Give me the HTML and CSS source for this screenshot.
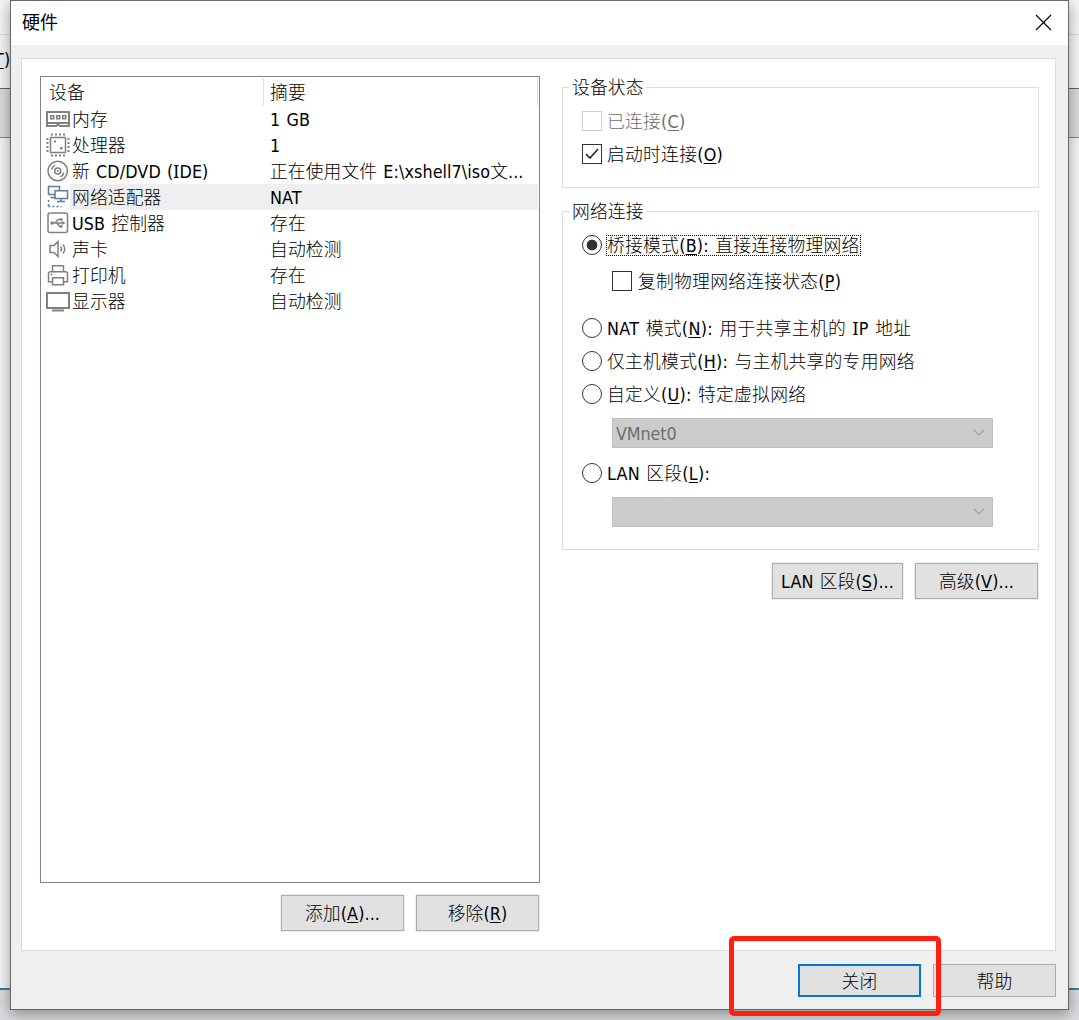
FILE: index.html
```html
<!DOCTYPE html>
<html lang="zh-CN">
<head>
<meta charset="utf-8">
<title>硬件</title>
<link rel="stylesheet" href="styles.css">
</head>
<body>
<div class="backdrop">
  <div class="b-title"></div>
  <div class="b-menu"><span><u>T</u>)</span></div>
  <div class="b-toolbar"></div>
  <div class="b-body"></div>
  <div class="b-status"></div>
</div>
<main class="dialog">
  <header class="titlebar">
    <h1>硬件</h1>
    <svg class="close" width="17" height="17" viewBox="0 0 17 17"><path d="M1 1L16 16M16 1L1 16"/></svg>
  </header>
  <section class="panel">
    <div class="left">
      <div class="list">
        <div class="row head"><span>设备</span><span class="sum">摘要</span></div>
        <div class="row">
          <svg class="ico" viewBox="0 0 24 24"><path stroke-width="2" d="M1 5h22v11H1zM1 14v5h9l2-1.500 2 1.500h9V14"/><path stroke-width="1.500" d="M4.750 8.750h3v3h-3zM10.750 8.750h3v3h-3zM16.750 8.750h3v3h-3z"/></svg>
          <span class="name">内存</span><span class="sum">1 GB</span></div>
        <div class="row">
          <svg class="ico" viewBox="0 0 24 24"><path stroke-width="1.500" d="M4.500 4.500h15v15h-15z"/><path stroke-width="2" stroke-dasharray="2 2" d="M5 1.500h14M5 22.500h14M1.500 5v14M22.500 5v14"/><path fill="#808080" stroke="none" d="M8 7.500h2v2H8zM14 14h2.500v2.500H14z"/></svg>
          <span class="name">处理器</span><span class="sum">1</span></div>
        <div class="row">
          <svg class="ico" viewBox="0 0 24 24"><circle cx="11.700" cy="12" r="9.700"/><circle cx="11.700" cy="12" r="3"/><circle cx="11.700" cy="12" r="1" fill="#808080" stroke="none"/><path d="M5.500 10.500a6.500 6.500 0 0 1 3.700-4.400M18 13.500a6.500 6.500 0 0 1-3.700 4.400"/></svg>
          <span class="name">新 CD/DVD (<span class="serif-i">I</span>DE)</span><span class="sum path">正在使用文件 E:\xshell7\iso文...</span></div>
        <div class="row selected">
          <svg class="ico net" viewBox="0 0 24 24"><path d="M8.500 9.500H2.500V1.500h11v4M9 5.750h12.500v7.750H9zM15 13.500v3M11 16.500h8M4.500 12.500h4"/><path stroke-dasharray="2 2" d="M2.500 15v6M2.500 21.500h13"/></svg>
          <span class="name">网络适配器</span><span class="sum">NAT</span></div>
        <div class="row">
          <svg class="ico" viewBox="0 0 24 24"><rect x="2" y="2" width="19.500" height="19.500" rx="2"/><path d="M6 12h11M8 12c3 0 2-3.500 5-3.500h2M10 12c3 0 2 3.500 4 3.500h2"/><path fill="#808080" stroke="none" d="M16 10l3.500 2-3.500 2zM14 7.200h2.500v2.500H14zM14 14.200h2.500v2.500H14z"/><circle cx="6" cy="12" r="1.700" fill="#808080" stroke="none"/></svg>
          <span class="name">USB 控制器</span><span class="sum">存在</span></div>
        <div class="row">
          <svg class="ico" viewBox="0 0 24 24"><path d="M4 8.500h4l4-4v15l-4-4H4zM14.500 9.500q2 2.500 0 5M17 7.500q3.500 4.500 0 9"/></svg>
          <span class="name">声卡</span><span class="sum">自动检测</span></div>
        <div class="row">
          <svg class="ico" viewBox="0 0 24 24"><path d="M6.500 8.750v-6h11v6M6.500 18.750h-4v-8q0-2 2-2h15q2 0 2 2v8h-4M6.500 14.750h11v7h-11zM4.500 11.500h2"/></svg>
          <span class="name">打印机</span><span class="sum">存在</span></div>
        <div class="row">
          <svg class="ico" viewBox="0 0 24 24"><path stroke-width="2" d="M1 4h22v15H1zM6 21.500h12"/></svg>
          <span class="name">显示器</span><span class="sum">自动检测</span></div>
      </div>
      <div class="buttons">
        <button>添加(<u>A</u>)...</button>
        <button>移除(<u>R</u>)</button>
      </div>
    </div>
    <div class="right">
      <fieldset class="status">
        <legend>设备状态</legend>
        <label class="opt off"><i class="box"></i><span>已连接(<u>C</u>)</span></label>
        <label class="opt"><i class="box"><svg width="18" height="18" viewBox="0 0 18 18"><path d="M3 9l4 4 8-9"/></svg></i><span>启动时连接(<u>O</u>)</span></label>
      </fieldset>
      <fieldset class="network">
        <legend>网络连接</legend>
        <label class="opt"><i class="radio on"></i><span class="focus">桥接模式(<u>B</u>): 直接连接物理网络</span></label>
        <label class="opt sub"><i class="box"></i><span>复制物理网络连接状态(<u>P</u>)</span></label>
        <label class="opt nat"><i class="radio"></i><span>NAT 模式(<u>N</u>): 用于共享主机的 <span class="serif-i">I</span>P 地址</span></label>
        <label class="opt"><i class="radio"></i><span>仅主机模式(<u>H</u>): 与主机共享的专用网络</span></label>
        <label class="opt"><i class="radio"></i><span>自定义(<u>U</u>): 特定虚拟网络</span></label>
        <div class="combo"><span>VMnet0</span><svg width="12" height="8" viewBox="0 0 12 8"><path d="M1 1l5 5 5-5"/></svg></div>
        <label class="opt lan"><i class="radio"></i><span>LAN 区段(<u>L</u>):</span></label>
        <div class="combo"><span></span><svg width="12" height="8" viewBox="0 0 12 8"><path d="M1 1l5 5 5-5"/></svg></div>
      </fieldset>
      <div class="buttons">
        <button class="wide">LAN 区段(<u>S</u>)...</button>
        <button>高级(<u>V</u>)...</button>
      </div>
    </div>
  </section>
  <footer class="footer">
    <button class="primary">关闭</button>
    <button>帮助</button>
  </footer>
</main>
<div class="marker"></div>
</body>
</html>
```
FILE: styles.css
```css
* { box-sizing: border-box; }
body {
  margin: 0;
  width: 1079px;
  height: 1020px;
  overflow: hidden;
  position: relative;
  color: #000;
  font: 300 17.8px/21px "DejaVu Sans Condensed", "Noto Sans CJK SC", sans-serif;
  letter-spacing: .1px;
  word-spacing: 1px;
}
span, legend, button, h1 { white-space: pre; }
u { text-decoration-thickness: 1px; text-underline-offset: 2px; }
svg { flex: none; fill: none; }
.serif-i { font-family: "Noto Sans", sans-serif; font-weight: 400; line-height: 0; }

.backdrop { height: 1020px; display: flex; flex-direction: column; background: #f6f6f6; }
.b-title { height: 35px; border-bottom: 1px solid #dcdcdc; }
.b-menu { height: 54px; border-bottom: 1px solid #666; padding-top: 14px; }
.b-menu span { margin-left: -6px; }
.b-toolbar { height: 49px; background: #dadbdd; border-bottom: 1px solid #4d93b5; }
.b-body { height: 852px; border-bottom: 2px solid #3e7f9f; }
.b-status { flex: 1; background: #dadbde; }

.dialog {
  position: absolute;
  left: 10px;
  top: 0;
  width: 1059px;
  height: 1010px;
  border: 1px solid #68686a;
  background: #efefef;
  box-shadow: 0 4px 14px rgba(0, 0, 0, .38);
}
.titlebar {
  height: 44px;
  padding: 0 16px 2px 11px;
  display: flex;
  justify-content: space-between;
  align-items: center;
  background: #fff;
}
h1 { margin: 0; font: 400 18px/22px "Noto Sans CJK SC", sans-serif; padding-bottom: 2px; }
.close { stroke: #000; stroke-width: 1.200; }

.panel {
  height: 893px;
  margin: 13px 12px 0 10px;
  padding: 17px 16px 0 18px;
  border: 1px solid #dadada;
  background: #fff;
  display: flex;
  justify-content: space-between;
}
.left { width: 500px; }
.right { width: 477px; }

.list { height: 807px; border: 1px solid #7f858c; padding: 1px 0 0; }
.row { height: 26px; display: grid; grid-template-columns: 29px 193px 1fr; align-items: center; }
.row .name, .row .sum { height: 26px; line-height: 24px; padding-top: 2px; }
.row.head { height: 28px; grid-template-columns: 223px 1fr; padding-right: 1px; }
.row.head span { height: 28px; line-height: 27px; padding: 1px 0 0 8px; border-right: 1px solid #e3e3e3; }
.row .sum { padding-left: 7px; }
.row.head .sum { padding-left: 6px; }
.row .path { letter-spacing: .08px; }
.row .name { padding-left: 2px; }
.ico { width: 24px; height: 24px; margin-left: 5px; stroke: #808080; stroke-width: 1.500; }
.ico.net { stroke: #5b7d99; }
.selected .name, .selected .sum { background: #efefef; }
.selected .sum { margin-right: 1px; }

.buttons { display: flex; justify-content: flex-end; gap: 12px; margin: 12px 1px 0 0; }
button {
  width: 123px;
  height: 36px;
  padding: 1px 0 0;
  border: 1px solid #adadad;
  background: #e1e1e1;
  color: #000;
  font: inherit;
  letter-spacing: inherit;
  word-spacing: inherit;
  box-shadow: 0 0 0 1px #efefef;
}
button.wide { width: 131px; }

fieldset { margin: 0; padding: 0 6px; border: 1px solid #dcdcdc; min-width: 0; }
legend { height: 21px; padding: 0 2px 0 3px; }
.status { height: 111px; margin-top: 1px; }
.network { height: 349px; margin-top: 13px; }
.opt { height: 33px; margin-left: 13px; display: flex; align-items: center; gap: 5px; letter-spacing: .25px; }
.opt > span { line-height: 20px; padding-top: 1px; }
legend + .opt { margin-top: 7px; }
.box, .radio { width: 20px; height: 20px; margin-bottom: 1px; flex: none; border: 1px solid #333; background: #fff; }
.radio { border-radius: 50%; }
.radio.on { background: radial-gradient(circle, #333 5px, #fff 5.700px); }
.box svg { display: block; stroke: #222; stroke-width: 1.600; }
.off { color: #6d6d6d; }
.off .box { border-color: #ccc; }
.opt > .focus { outline: 1px dotted #000; outline-offset: -1px; margin-left: -1px; padding: 1px 1px 0; }
.opt.sub { margin: 3px 0 0 43px; gap: 6px; }
.opt.nat { margin-top: 14px; }
.opt.nat > span { letter-spacing: .32px; }
.opt.lan { margin-top: 9px; }
.combo {
  width: 381px;
  height: 30px;
  margin: 7px 0 0 43px;
  padding: 0 7px 0 3px;
  border: 1px solid #bfbfbf;
  background: #ccc;
  color: #6d6d6d;
  display: flex;
  align-items: center;
  justify-content: space-between;
}
.combo span { padding-top: 1px; letter-spacing: -.1px; }
.combo svg { stroke: #a0a0a0; stroke-width: 1.200; }
.right .buttons { margin-top: 13px; }

.footer { display: flex; justify-content: flex-end; gap: 12px; padding: 13px 12px 0 0; }
.footer button { height: 33px; box-shadow: none; }
.footer .primary { border: 2px solid #0078d7; }

.marker {
  position: absolute;
  left: 729px;
  top: 936px;
  width: 212px;
  height: 80px;
  border: 5px solid #ff2012;
  border-radius: 5px;
}
```
